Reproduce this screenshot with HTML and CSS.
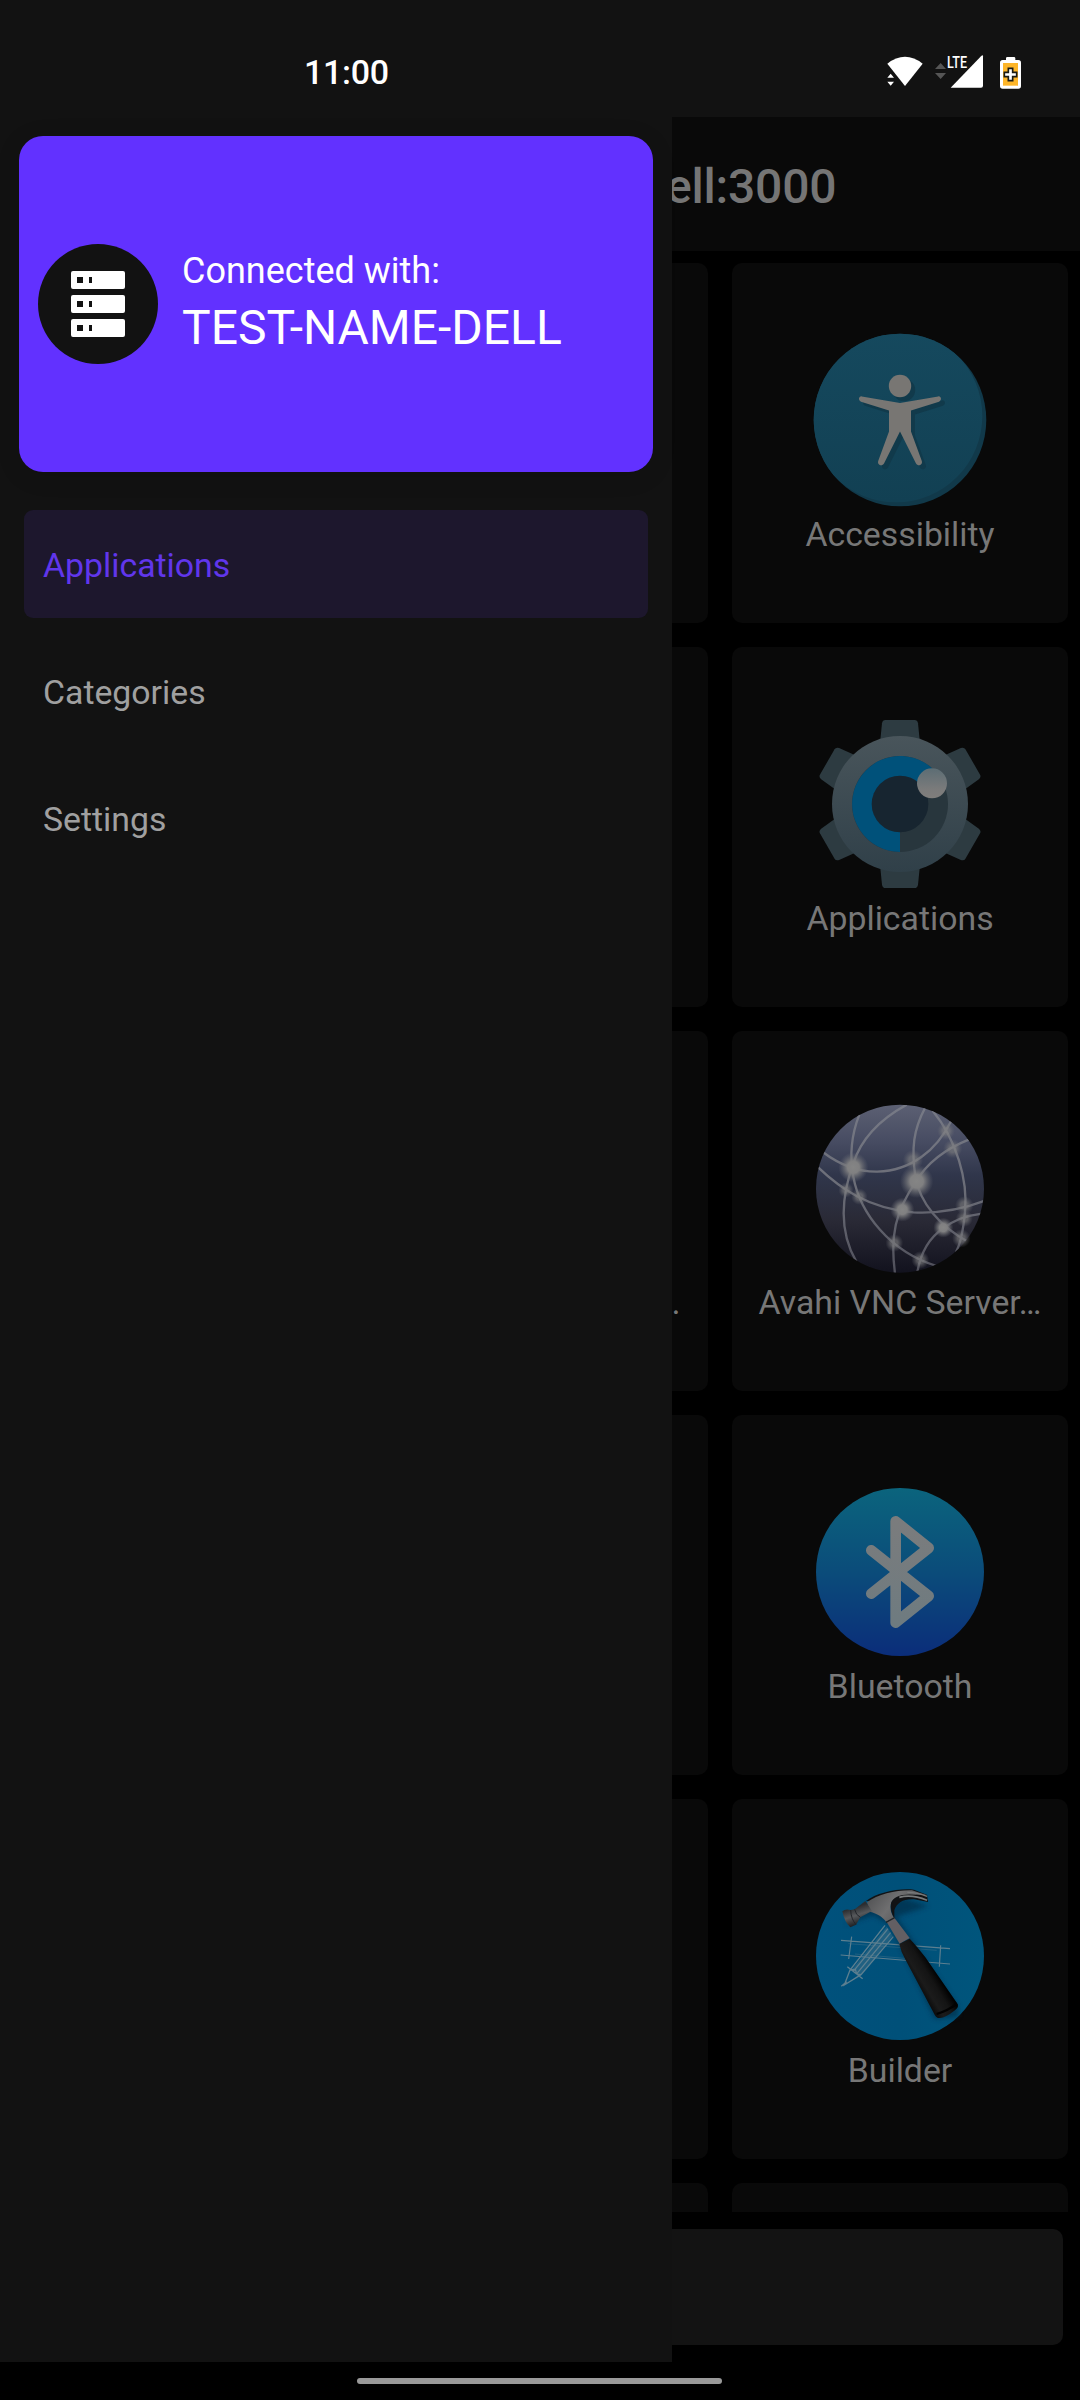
FILE: index.html
```html
<!DOCTYPE html>
<html lang="en">
<head>
<meta charset="utf-8">
<meta name="viewport" content="width=device-width">
<title>Applications</title>
<link rel="stylesheet" href="styles.css">
</head>
<body>
<div class="screen">
  <header class="status-bar">
    <time class="clock">11:00</time>
    <svg class="status-icons" viewBox="0 0 600 210" aria-hidden="true">
      <path fill="#fff" d="M82 71Q135 30 188 71L135 138Z"/>
      <path fill="#fff" d="M92 101l10 12H82zM82 125h20l-10 12z"/>
      <path fill="#555" d="M242 69l16 18h-33zM225 99h33l-16 18z"/>
      <path fill="#fff" d="M272 143L363 49q6-6 6 0v88q0 6-6 6z"/>
      <text class="lte" x="261" y="83" textLength="60" lengthAdjust="spacingAndGlyphs">LTE</text>
      <path fill="#fff" d="M438 60v-5q0-4 4-4h20q4 0 4 4v5h9q8 0 8 8v70q0 8-8 8h-47q-8 0-8-8V68q0-8 8-8z"/>
      <path fill="#fdb528" d="M429 69h45v68h-45z"/>
      <path fill="#fff" stroke="#1b1b14" stroke-width="5" d="M445 85h13v12h12v13h-12v12h-13v-12h-12V97h12z"/>
    </svg>
  </header>

  <div class="body">
    <main class="page">
      <div class="app-bar"><h1 class="title">ell:3000</h1></div>
      <div class="grid">
        <div class="card"></div>
        <div class="card"></div>
        <div class="card">
          <svg class="icon" viewBox="804 324 192 192">
            <defs><linearGradient id="teal" x2="0" y2="1"><stop stop-color="#15495e"/><stop offset="1" stop-color="#124053"/></linearGradient>
            <clipPath id="disc"><circle cx="900" cy="420" r="86.3"/></clipPath></defs>
            <circle cx="900" cy="420" r="86.3" fill="#11394a"/>
            <circle cx="896" cy="416" r="86.3" fill="url(#teal)" clip-path="url(#disc)"/>
            <g fill="#113a4b" transform="translate(4 4)">
              <circle cx="900" cy="386" r="11.2"/>
              <path d="M861.8 396.4L900 403L938.2 396.4C941.5 396 942 400.5 939 401.8L911 410.5V431.5L921.8 461C923 465 918 467 916 463.5L900 431.5L884 463.5C882 467 877 465 878.2 461L889 431.5V410.5L861 401.8C858 400.5 858.5 396 861.8 396.4Z"/>
            </g>
            <g fill="#787673">
              <circle cx="900" cy="386" r="11.2"/>
              <path d="M861.8 396.4L900 403L938.2 396.4C941.5 396 942 400.5 939 401.8L911 410.5V431.5L921.8 461C923 465 918 467 916 463.5L900 431.5L884 463.5C882 467 877 465 878.2 461L889 431.5V410.5L861 401.8C858 400.5 858.5 396 861.8 396.4Z"/>
            </g>
          </svg>
          <span class="label">Accessibility</span>
        </div>

        <div class="card"></div>
        <div class="card"></div>
        <div class="card">
          <svg class="icon" viewBox="42 54 576 576">
            <defs>
              <linearGradient id="steel" x2="0" y2="1"><stop stop-color="#49555b"/><stop offset="1" stop-color="#304049"/></linearGradient>
              <linearGradient id="knob" x2="0" y2="1"><stop stop-color="#5c6d74"/><stop offset=".7" stop-color="#7b7b7b"/><stop offset="1" stop-color="#807e7c"/></linearGradient>
              <path id="tooth" d="M270 160L276 100Q278 90 286 90H374Q382 90 384 100L390 160Z"/>
            </defs>
            <g fill="#2d3b41">
              <use href="#tooth"/>
              <use href="#tooth" transform="rotate(60 330 342)"/>
              <use href="#tooth" transform="rotate(120 330 342)"/>
              <use href="#tooth" transform="rotate(180 330 342)"/>
              <use href="#tooth" transform="rotate(240 330 342)"/>
              <use href="#tooth" transform="rotate(300 330 342)"/>
            </g>
            <circle cx="330" cy="342" r="204" fill="url(#steel)"/>
            <circle cx="330" cy="342" r="144" fill="#28363d"/>
            <path fill="#00517a" d="M330 486A144 144 0 1 1 432 240L330 342Z"/>
            <circle cx="330" cy="342" r="85" fill="#172530"/>
            <circle cx="426" cy="280" r="45" fill="url(#knob)"/>
          </svg>
          <span class="label">Applications</span>
        </div>

        <div class="card"></div>
        <div class="card"><span class="icon"></span><span class="label label-end">…</span></div>
        <div class="card">
          <svg class="icon" viewBox="42 36 576 576">
            <defs>
              <linearGradient id="night" x2="0" y2="1"><stop stop-color="#5c6073"/><stop offset=".22" stop-color="#474c62"/><stop offset=".42" stop-color="#30364b"/><stop offset=".7" stop-color="#292935"/><stop offset="1" stop-color="#12121e"/></linearGradient>
              <linearGradient id="wire" gradientUnits="userSpaceOnUse" x1="0" y1="74" x2="0" y2="578"><stop stop-color="#777a86"/><stop offset=".5" stop-color="#6b6d77"/><stop offset="1" stop-color="#50505b"/></linearGradient>
              <radialGradient id="glow"><stop stop-color="#858585"/><stop offset=".4" stop-color="#808081"/><stop offset=".7" stop-color="#747579" stop-opacity=".5"/><stop offset="1" stop-color="#666975" stop-opacity="0"/></radialGradient>
              <clipPath id="globe"><circle cx="330" cy="326" r="252"/></clipPath>
            </defs>
            <circle cx="330" cy="326" r="252" fill="url(#night)"/>
            <g fill="none" stroke="url(#wire)" stroke-width="7" clip-path="url(#globe)">
              <path d="M208 104C186 160 178 226 190 290C210 400 300 515 440 558"/>
              <path d="M350 74C266 120 213 178 190 250C150 360 150 460 199 545"/>
              <path d="M98 216C150 255 200 276 262 275C365 272 440 210 484 122"/>
              <path d="M82 260C150 325 235 386 370 397C450 401 520 388 590 360"/>
              <path d="M405 84C370 150 364 205 376 290C390 370 450 440 535 486"/>
              <path d="M538 178C465 207 410 250 378 305C315 395 300 470 315 580"/>
              <path d="M428 92C500 180 534 300 525 395C520 450 512 490 498 516"/>
              <path d="M576 401C535 406 490 421 460 445C415 475 392 520 382 576"/>
            </g>
            <g fill="url(#glow)">
              <circle cx="190" cy="262" r="45"/><circle cx="380" cy="304" r="50"/>
              <circle cx="337" cy="389" r="36"/><circle cx="460" cy="443" r="30"/>
              <g opacity=".6"><circle cx="369" cy="240" r="31"/><circle cx="468" cy="153" r="27"/><circle cx="488" cy="206" r="29"/><circle cx="208" cy="350" r="25"/><circle cx="168" cy="330" r="23"/><circle cx="313" cy="489" r="27"/><circle cx="391" cy="540" r="27"/><circle cx="523" cy="376" r="28"/><circle cx="523" cy="415" r="26"/><circle cx="514" cy="475" r="28"/></g>
            </g>
          </svg>
          <span class="label">Avahi VNC Server…</span>
        </div>

        <div class="card"></div>
        <div class="card"></div>
        <div class="card">
          <svg class="icon" viewBox="42 48 576 576">
            <defs>
              <linearGradient id="blue" x2="0" y2="1"><stop stop-color="#0b647d"/><stop offset=".5" stop-color="#0b4c7a"/><stop offset="1" stop-color="#0b2d7a"/></linearGradient>
              <linearGradient id="rune" gradientUnits="userSpaceOnUse" x1="0" y1="170" x2="0" y2="500"><stop stop-color="#7b7c7d"/><stop offset="1" stop-color="#6e7b80"/></linearGradient>
            </defs>
            <circle cx="330" cy="336" r="252" fill="url(#blue)"/>
            <path fill="none" stroke="url(#rune)" stroke-width="32" stroke-linecap="round" stroke-linejoin="round" d="M244 271L416 408L317 488V184L416 264L244 401"/>
          </svg>
          <span class="label">Bluetooth</span>
        </div>

        <div class="card"></div>
        <div class="card"></div>
        <div class="card">
          <svg class="icon" viewBox="42 30 576 576">
            <defs>
              <linearGradient id="sheet" x2="1" y2="0"><stop stop-color="#00517c"/><stop offset=".5" stop-color="#005079"/><stop offset="1" stop-color="#00557c"/></linearGradient>
              <linearGradient id="grip" gradientUnits="userSpaceOnUse" x1="375" y1="410" x2="440" y2="370"><stop stop-color="#060606"/><stop offset=".35" stop-color="#1b1b1b"/><stop offset=".7" stop-color="#141414"/><stop offset="1" stop-color="#020202"/></linearGradient>
              <linearGradient id="metal" x2="1" y2=".4"><stop stop-color="#4b4c4e"/><stop offset=".5" stop-color="#6f6f70"/><stop offset="1" stop-color="#4c4c4e"/></linearGradient>
              <linearGradient id="face" gradientUnits="userSpaceOnUse" x1="175" y1="178" x2="192" y2="230"><stop stop-color="#2b2d30"/><stop offset=".45" stop-color="#56585b"/><stop offset="1" stop-color="#1b1d20"/></linearGradient>
              <filter id="soft" x="-20%" y="-20%" width="140%" height="140%"><feGaussianBlur stdDeviation="8"/></filter>
            </defs>
            <circle cx="330" cy="318" r="252" fill="url(#sheet)"/>
            <path fill="#5c7f90" opacity=".35" d="M290 230L308 258L213 374L185 360Z"/>
            <g fill="none" stroke="#5c7f90" stroke-width="3.5">
              <path d="M153 271L480 296M152 315L480 342M185 260L176 327M452 286L448 350"/>
              <path d="M175 281L440 301M195 312L400 330" stroke-width="2" opacity=".5"/>
              <path d="M285 226L180 360L163 405L213 374L310 260M294 236L190 364M302 248L201 370M180 360L196 358L200 372L213 374M154 409L170 395M172 350L218 386" stroke-width="4"/>
            </g>
            <path fill="#002c45" opacity=".65" filter="url(#soft)" d="M165 225L250 195L300 225L434 508L505 500L505 470L360 260L320 200L415 168L330 140L240 160Z"/>
            <path fill="#111315" d="M228 153C260 127 330 113 372 119L412 135L410 145L350 138L300 150Z"/>
            <path fill="url(#metal)" d="M231 157C264 132 318 120 366 121L411 136C353 131 306 139 302 164C300 181 306 195 313 204L288 215C276 199 262 191 240 185Z"/>
            <path fill="#111214" d="M303 160C310 133 356 126 412 141L414 156L380 149C345 144 321 156 313 181L313 204Q300 185 303 160Z"/>
            <path fill="none" stroke="#77797a" stroke-width="5" d="M328 142Q365 132 411 151"/>
            <path fill="none" stroke="#77797a" stroke-width="4" d="M352 127Q382 127 411 139"/>
            <path fill="url(#face)" d="M157 184Q166 175 182 180L194 178L226 153L246 183L211 202L198 224L181 232Q163 216 157 184Z"/>
            <path fill="none" stroke="#22252a" stroke-width="3" d="M182 180Q183 207 198 224M194 178Q197 195 211 202"/>
            <path fill="#635f63" d="M290 216L313 203L359 264L329 281Z"/>
            <path fill="none" stroke="#222426" stroke-width="4" d="M288 217L314 203"/>
            <path fill="url(#grip)" d="M328 282L359 266Q380 288 406 322L501 459Q510 471 493 482Q468 502 449 504Q440 505 434 494L345 326Q333 306 328 282Z"/>
            <path fill="none" stroke="#020202" stroke-width="7" d="M440 492Q472 483 501 461"/>
          </svg>
          <span class="label">Builder</span>
        </div>

        <div class="card"></div>
        <div class="card"></div>
        <div class="card"></div>
      </div>
      <div class="bottom-bar"></div>
    </main>

    <aside class="drawer">
      <section class="connection">
        <div class="avatar">
          <svg class="server" viewBox="0 0 54 66">
            <path fill="#fff" d="M2 0h50q2 0 2 2v14q0 2-2 2H2q-2 0-2-2V2Q0 0 2 0zM2 24h50q2 0 2 2v14q0 2-2 2H2q-2 0-2-2V26q0-2 2-2zM2 48h50q2 0 2 2v14q0 2-2 2H2q-2 0-2-2V50q0-2 2-2z"/>
            <path fill="#121212" d="M6 6h6v6H6zM18 6h3v6h-3zM6 30h6v6H6zM18 30h3v6h-3zM6 54h6v6H6zM18 54h3v6h-3z"/>
          </svg>
        </div>
        <div class="connection-text">
          <span class="connection-caption">Connected with:</span>
          <strong class="connection-name">TEST-NAME-DELL</strong>
        </div>
      </section>
      <nav class="menu">
        <a class="menu-item active">Applications</a>
        <a class="menu-item">Categories</a>
        <a class="menu-item">Settings</a>
      </nav>
    </aside>
  </div>

  <footer class="system-nav"><span class="home-handle"></span></footer>
</div>
</body>
</html>
```
FILE: styles.css
```css
* { box-sizing: border-box; }

body {
  margin: 0;
  background: #000;
  font-family: Roboto, sans-serif;
}

.screen {
  width: 1080px;
  height: 2400px;
  display: flex;
  flex-direction: column;
  overflow: hidden;
}

.status-bar {
  height: 117px;
  flex: none;
  display: flex;
  justify-content: space-between;
  align-items: flex-start;
  padding: 40px 20px 0 304px;
  background: #121212;
}

.clock {
  color: #fff;
  font-size: 34px;
  font-weight: 500;
  line-height: 64px;
  letter-spacing: -.3px;
}

.status-icons {
  width: 200px;
  height: 70px;
}

.lte {
  fill: #fff;
  font-size: 49px;
  font-weight: 500;
}

.body {
  position: relative;
  height: 2245px;
  flex: none;
}

.page {
  height: 100%;
  display: flex;
  flex-direction: column;
}

.app-bar {
  height: 134px;
  flex: none;
  padding: 5px 0 0 666px;
  display: flex;
  align-items: center;
  background: #090909;
}

.title {
  margin: 0;
  color: #757575;
  font-size: 48px;
  font-weight: 500;
  line-height: 56px;
  letter-spacing: -.2px;
}

.grid {
  height: 1961px;
  flex: none;
  display: grid;
  grid-template-columns: repeat(3, 336px);
  grid-auto-rows: 360px;
  gap: 24px;
  padding: 12px;
  overflow: hidden;
}

.card {
  display: flex;
  flex-direction: column;
  align-items: center;
  padding: 61px 24px 0;
  border-radius: 10px;
  background: #090909;
}

.icon {
  display: block;
  width: 192px;
  height: 192px;
  flex: none;
}

.label {
  color: #777;
  font-size: 33.8px;
  line-height: 37px;
  white-space: nowrap;
}

.label-end {
  align-self: flex-end;
  padding-right: 4px;
}

.bottom-bar {
  height: 116px;
  flex: none;
  margin: 17px 17px 0;
  border-radius: 10px;
  background: #131313;
}

.drawer {
  position: absolute;
  inset: 0 auto 0 0;
  width: 672px;
  padding: 19px;
  background: #121212;
}

.connection {
  height: 336px;
  display: flex;
  align-items: center;
  gap: 24px;
  padding: 0 19px;
  border-radius: 24px;
  background: #6231ff;
  box-shadow: 0 4px 24px rgba(0, 0, 0, .12);
}

.avatar {
  width: 120px;
  height: 120px;
  display: grid;
  place-items: center;
  border-radius: 50%;
  background: #121212;
}

.server {
  width: 54px;
  height: 66px;
}

.connection-text {
  display: flex;
  flex-direction: column;
  padding-bottom: 2px;
  color: #fff;
}

.connection-caption {
  font-size: 36px;
  line-height: 50px;
}

.connection-name {
  font-size: 48px;
  font-weight: 400;
  line-height: 64px;
}

.menu {
  display: flex;
  flex-direction: column;
  gap: 19px;
  padding: 38px 5px 0;
}

.menu-item {
  height: 108px;
  display: flex;
  align-items: center;
  padding: 3px 0 0 19px;
  border-radius: 9px;
  color: #a0a0a0;
  font-size: 33.8px;
}

.menu-item.active {
  background: #1d172d;
  color: #6136ec;
}

.system-nav {
  height: 38px;
  display: flex;
  justify-content: center;
  padding: 16px 1px 0 0;
  background: #000;
}

.home-handle {
  width: 365px;
  height: 6px;
  border-radius: 3px;
  background: #999;
}
```
